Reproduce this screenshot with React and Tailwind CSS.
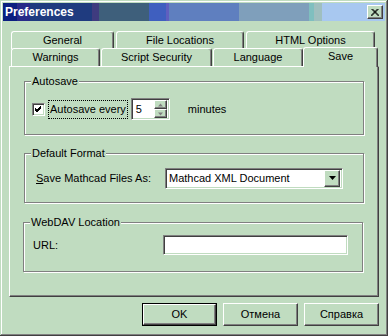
const raised = "border-t border-l border-t-white border-l-white border-r border-b border-r-[#404040] border-b-[#404040] shadow-[inset_-1px_-1px_0_#808080]";
const sunken = "border-t border-l border-t-[#808080] border-l-[#808080] border-r border-b border-r-white border-b-white shadow-[inset_1px_1px_0_#404040,inset_-1px_-1px_0_#c0dcc0]";

const Tab = ({ label, width, selected }) => (
  <div
    className={`flex items-center justify-center border-l border-t border-white border-r border-r-[#404040] shadow-[inset_-1px_0_0_#808080] rounded-t-[3px] bg-[#c0dcc0] ${
      selected ? "h-[20px] -mb-[1px] pb-[3px] relative z-10" : "h-[18px]"
    }`}
    style={{ width }}
  >
    {label}
  </div>
);

const Group = ({ title, className, children }) => (
  <div className={`relative border border-[#808080] shadow-[1px_1px_0_#fff,inset_1px_1px_0_#fff] ${className}`}>
    <span className="absolute left-[6px] -top-[7px] px-[1px] bg-[#c0dcc0] leading-[13px]">{title}</span>
    {children}
  </div>
);

const Button = ({ label, isDefault }) => (
  <div className={`w-[75px] h-[23px] ${isDefault ? "border border-black" : ""}`}>
    <div className={`w-full h-full flex items-center justify-center ${raised}`}>{label}</div>
  </div>
);

const Arrow = ({ up, color = "#000", w = 7 }) => (
  <svg width={w} height="4" viewBox="0 0 7 4">
    <path d={up ? "M3.5 0 L7 4 L0 4 Z" : "M0 0 L7 0 L3.5 4 Z"} fill={color} />
  </svg>
);

export default function App() {
  return (
    <div className="w-[388px] h-[336px] bg-[#c0dcc0] p-[3px] text-[11px] leading-[13px] text-black font-['Liberation_Sans',Arial,sans-serif] shadow-[inset_-1px_-1px_0_#404040,inset_1px_1px_0_#c0dcc0,inset_-2px_-2px_0_#808080,inset_2px_2px_0_#fff]">
      {/* title bar */}
      <div className="h-[18px] flex items-center pl-[2px] pr-[2px] bg-[linear-gradient(90deg,#0b1f80_0px,#0b1f80_14px,#282a88_14px,#282a88_27px,#1f3b7f_27px,#1f3b7f_89px,#3f3b7f_89px,#3f3b7f_96px,#3e5f7b_96px,#3e5f7b_146px,#3f5fbf_146px,#3f5fbf_163px,#5f5fbf_163px,#5f5fbf_166px,#5f7fbf_166px,#5f7fbf_236px,#7f9fbb_236px,#7f9fbb_306px,#7fbfbf_306px,#7fbfbf_311px,#9fbfbf_311px,#9fbfbf_319px,#a8c8f0_319px)]">
        <span className="text-white font-bold text-[12px]">Preferences</span>
        <div className={`ml-auto w-[16px] h-[14px] bg-[#c0dcc0] flex items-center justify-center ${raised}`}>
          <svg width="8" height="7" viewBox="0 0 8 7">
            <path d="M0.5 0 L7.5 7 M1.5 0 L8.5 7 M7.5 0 L0.5 7 M6.5 0 L-0.5 7" stroke="#000" strokeWidth="1" />
          </svg>
        </div>
      </div>

      {/* tabs */}
      <div className="ml-[6px] mt-[10px] w-[370px]">
        <div className="flex pl-[2px] gap-[2px]">
          <Tab label="General" width={103} />
          <Tab label="File Locations" width={128} />
          <Tab label="HTML Options" width={129} />
        </div>
        <div className="flex items-end h-[18px] -mt-[1px] pl-[2px]">
          <div className="flex gap-[1px] items-end">
            <Tab label="Warnings" width={89} />
            <Tab label="Script Security" width={111} />
            <Tab label="Language" width={90} />
          </div>
          <Tab label="Save" width={75} selected />
        </div>

        {/* panel */}
        <div className="h-[231px] border-l border-t border-white border-r border-b border-r-[#404040] border-b-[#404040] shadow-[inset_-1px_-1px_0_#808080] pt-[14px] pl-[14px] flex flex-col">
          <Group title="Autosave" className="w-[340px] h-[54px] flex items-center pl-[7px] pt-[2px]">
            <div className={`w-[13px] h-[13px] bg-white flex items-center justify-center ${sunken}`}>
              <svg width="7" height="7" viewBox="0 0 7 7">
                <path d="M0 2 L2 4 L6 0 M0 3 L2 5 L6 1 M0 4 L2 6 L6 2" stroke="#000" strokeWidth="1" fill="none" />
              </svg>
            </div>
            <div className="ml-[3px] h-[19px] flex items-center px-[1px] border border-dotted border-black">Autosave every</div>
            <div className={`ml-[3px] w-[39px] h-[22px] bg-white flex items-center pl-[4px] pr-[2px] ${sunken}`}>
              <span className="flex-1">5</span>
              <div className="flex flex-col gap-0 w-[13px] h-[18px]">
                <div className={`flex-1 bg-[#c0dcc0] flex items-center justify-center ${raised}`}>
                  <Arrow up color="#808080" w={5} />
                </div>
                <div className={`flex-1 bg-[#c0dcc0] flex items-center justify-center ${raised}`}>
                  <Arrow color="#808080" w={5} />
                </div>
              </div>
            </div>
            <span className="ml-[18px]">minutes</span>
          </Group>

          <Group title="Default Format" className="mt-[18px] w-[340px] h-[50px] flex items-center pl-[11px]">
            <span className="w-[129px]">
              <span className="underline">S</span>ave Mathcad Files As:
            </span>
            <div className={`w-[178px] h-[21px] bg-white flex items-center pl-[3px] pr-[2px] ${sunken}`}>
              <span className="flex-1">Mathcad XML Document</span>
              <div className={`w-[16px] h-[17px] bg-[#c0dcc0] flex items-center justify-center ${raised}`}>
                <Arrow />
              </div>
            </div>
          </Group>

          <Group title="WebDAV Location" className="mt-[19px] -ml-[1px] w-[340px] h-[50px] flex items-center pl-[9px] pb-[4px]">
            <span className="w-[130px]">URL:</span>
            <div className={`w-[185px] h-[20px] bg-white ${sunken}`} />
          </Group>
        </div>
      </div>

      {/* buttons */}
      <div className="mt-[6px] flex justify-end gap-[6px] pr-[6px]">
        <Button label="OK" isDefault />
        <Button label="Отмена" />
        <Button label="Справка" />
      </div>
    </div>
  );
}
